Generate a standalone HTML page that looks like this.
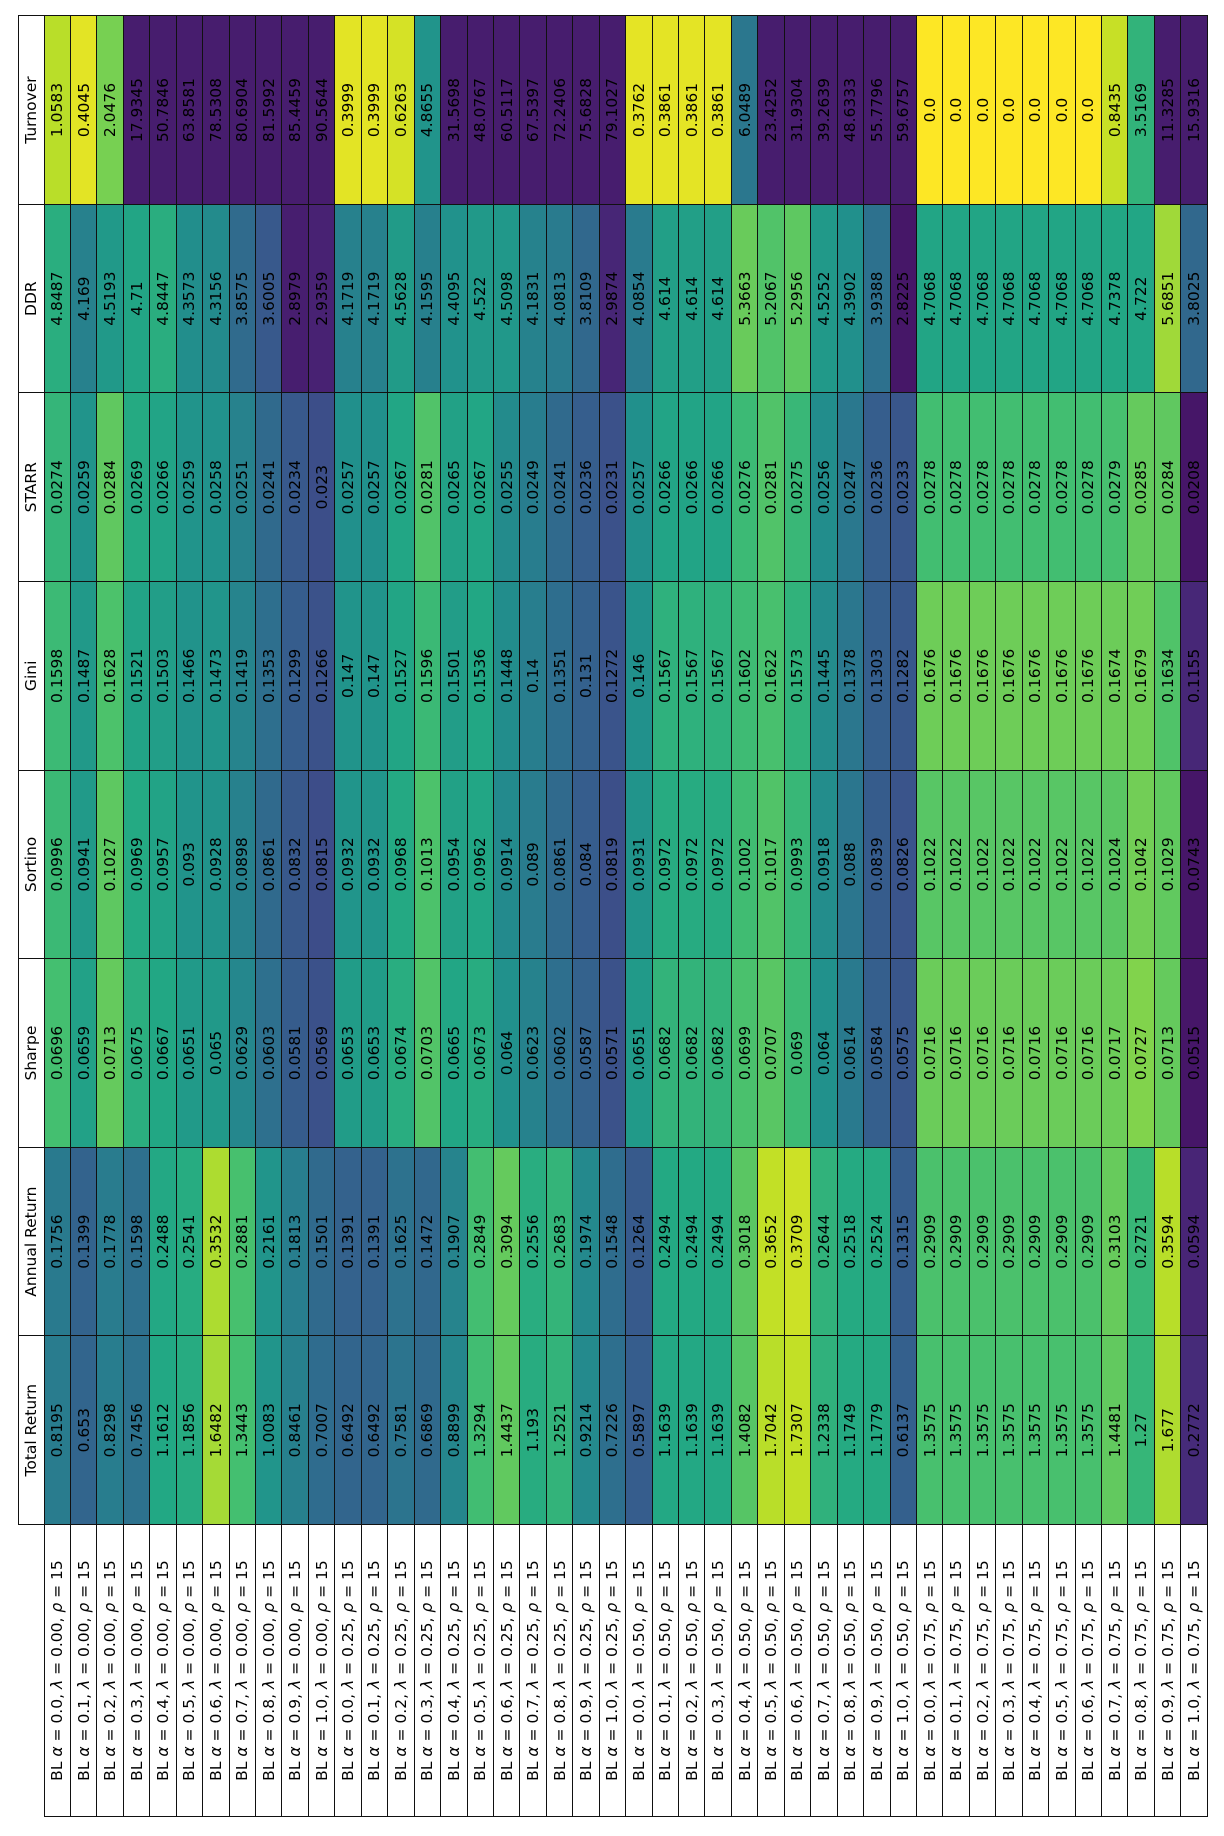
<!DOCTYPE html>
<html><head><meta charset="utf-8">
<style>
html,body{margin:0;padding:0;background:#fff;width:1224px;height:1836px;overflow:hidden;}
#wrap{position:absolute;left:17.5px;top:1817px;width:1801px;height:1190px;transform-origin:0 0;transform:rotate(-90deg);}
table{border-collapse:collapse;table-layout:fixed;width:1801px;height:1190px;font-family:"DejaVu Sans","Liberation Sans",sans-serif;font-size:15.5px;color:#000;}
td{border:1.3px solid #111;padding:0;text-align:center;white-space:nowrap;overflow:hidden;line-height:16px;}
tr.h{height:25.5px;}
tr.h td{background:#fff;}
td.c0{border:none;background:#fff;}
td.l{background:#fff;}
i{font-style:italic;}
</style></head><body>
<div id="wrap">
<table>
<colgroup><col style="width:292px"><col style="width:188.6px"><col style="width:188.6px"><col style="width:188.6px"><col style="width:188.6px"><col style="width:188.6px"><col style="width:188.6px"><col style="width:188.6px"><col style="width:188.6px"></colgroup>
<tr class="h"><td class="c0"></td><td>Total Return</td><td>Annual Return</td><td>Sharpe</td><td>Sortino</td><td>Gini</td><td>STARR</td><td>DDR</td><td>Turnover</td></tr>
<tr><td class="l">BL <i>α</i> = 0.0, <i>λ</i> = 0.00, <i>ρ</i> = 15</td><td>0.8195</td><td>0.1756</td><td>0.0696</td><td>0.0996</td><td>0.1598</td><td>0.0274</td><td>4.8487</td><td>1.0583</td></tr>
<tr><td class="l">BL <i>α</i> = 0.1, <i>λ</i> = 0.00, <i>ρ</i> = 15</td><td>0.653</td><td>0.1399</td><td>0.0659</td><td>0.0941</td><td>0.1487</td><td>0.0259</td><td>4.169</td><td>0.4045</td></tr>
<tr><td class="l">BL <i>α</i> = 0.2, <i>λ</i> = 0.00, <i>ρ</i> = 15</td><td>0.8298</td><td>0.1778</td><td>0.0713</td><td>0.1027</td><td>0.1628</td><td>0.0284</td><td>4.5193</td><td>2.0476</td></tr>
<tr><td class="l">BL <i>α</i> = 0.3, <i>λ</i> = 0.00, <i>ρ</i> = 15</td><td>0.7456</td><td>0.1598</td><td>0.0675</td><td>0.0969</td><td>0.1521</td><td>0.0269</td><td>4.71</td><td>17.9345</td></tr>
<tr><td class="l">BL <i>α</i> = 0.4, <i>λ</i> = 0.00, <i>ρ</i> = 15</td><td>1.1612</td><td>0.2488</td><td>0.0667</td><td>0.0957</td><td>0.1503</td><td>0.0266</td><td>4.8447</td><td>50.7846</td></tr>
<tr><td class="l">BL <i>α</i> = 0.5, <i>λ</i> = 0.00, <i>ρ</i> = 15</td><td>1.1856</td><td>0.2541</td><td>0.0651</td><td>0.093</td><td>0.1466</td><td>0.0259</td><td>4.3573</td><td>63.8581</td></tr>
<tr><td class="l">BL <i>α</i> = 0.6, <i>λ</i> = 0.00, <i>ρ</i> = 15</td><td>1.6482</td><td>0.3532</td><td>0.065</td><td>0.0928</td><td>0.1473</td><td>0.0258</td><td>4.3156</td><td>78.5308</td></tr>
<tr><td class="l">BL <i>α</i> = 0.7, <i>λ</i> = 0.00, <i>ρ</i> = 15</td><td>1.3443</td><td>0.2881</td><td>0.0629</td><td>0.0898</td><td>0.1419</td><td>0.0251</td><td>3.8575</td><td>80.6904</td></tr>
<tr><td class="l">BL <i>α</i> = 0.8, <i>λ</i> = 0.00, <i>ρ</i> = 15</td><td>1.0083</td><td>0.2161</td><td>0.0603</td><td>0.0861</td><td>0.1353</td><td>0.0241</td><td>3.6005</td><td>81.5992</td></tr>
<tr><td class="l">BL <i>α</i> = 0.9, <i>λ</i> = 0.00, <i>ρ</i> = 15</td><td>0.8461</td><td>0.1813</td><td>0.0581</td><td>0.0832</td><td>0.1299</td><td>0.0234</td><td>2.8979</td><td>85.4459</td></tr>
<tr><td class="l">BL <i>α</i> = 1.0, <i>λ</i> = 0.00, <i>ρ</i> = 15</td><td>0.7007</td><td>0.1501</td><td>0.0569</td><td>0.0815</td><td>0.1266</td><td>0.023</td><td>2.9359</td><td>90.5644</td></tr>
<tr><td class="l">BL <i>α</i> = 0.0, <i>λ</i> = 0.25, <i>ρ</i> = 15</td><td>0.6492</td><td>0.1391</td><td>0.0653</td><td>0.0932</td><td>0.147</td><td>0.0257</td><td>4.1719</td><td>0.3999</td></tr>
<tr><td class="l">BL <i>α</i> = 0.1, <i>λ</i> = 0.25, <i>ρ</i> = 15</td><td>0.6492</td><td>0.1391</td><td>0.0653</td><td>0.0932</td><td>0.147</td><td>0.0257</td><td>4.1719</td><td>0.3999</td></tr>
<tr><td class="l">BL <i>α</i> = 0.2, <i>λ</i> = 0.25, <i>ρ</i> = 15</td><td>0.7581</td><td>0.1625</td><td>0.0674</td><td>0.0968</td><td>0.1527</td><td>0.0267</td><td>4.5628</td><td>0.6263</td></tr>
<tr><td class="l">BL <i>α</i> = 0.3, <i>λ</i> = 0.25, <i>ρ</i> = 15</td><td>0.6869</td><td>0.1472</td><td>0.0703</td><td>0.1013</td><td>0.1596</td><td>0.0281</td><td>4.1595</td><td>4.8655</td></tr>
<tr><td class="l">BL <i>α</i> = 0.4, <i>λ</i> = 0.25, <i>ρ</i> = 15</td><td>0.8899</td><td>0.1907</td><td>0.0665</td><td>0.0954</td><td>0.1501</td><td>0.0265</td><td>4.4095</td><td>31.5698</td></tr>
<tr><td class="l">BL <i>α</i> = 0.5, <i>λ</i> = 0.25, <i>ρ</i> = 15</td><td>1.3294</td><td>0.2849</td><td>0.0673</td><td>0.0962</td><td>0.1536</td><td>0.0267</td><td>4.522</td><td>48.0767</td></tr>
<tr><td class="l">BL <i>α</i> = 0.6, <i>λ</i> = 0.25, <i>ρ</i> = 15</td><td>1.4437</td><td>0.3094</td><td>0.064</td><td>0.0914</td><td>0.1448</td><td>0.0255</td><td>4.5098</td><td>60.5117</td></tr>
<tr><td class="l">BL <i>α</i> = 0.7, <i>λ</i> = 0.25, <i>ρ</i> = 15</td><td>1.193</td><td>0.2556</td><td>0.0623</td><td>0.089</td><td>0.14</td><td>0.0249</td><td>4.1831</td><td>67.5397</td></tr>
<tr><td class="l">BL <i>α</i> = 0.8, <i>λ</i> = 0.25, <i>ρ</i> = 15</td><td>1.2521</td><td>0.2683</td><td>0.0602</td><td>0.0861</td><td>0.1351</td><td>0.0241</td><td>4.0813</td><td>72.2406</td></tr>
<tr><td class="l">BL <i>α</i> = 0.9, <i>λ</i> = 0.25, <i>ρ</i> = 15</td><td>0.9214</td><td>0.1974</td><td>0.0587</td><td>0.084</td><td>0.131</td><td>0.0236</td><td>3.8109</td><td>75.6828</td></tr>
<tr><td class="l">BL <i>α</i> = 1.0, <i>λ</i> = 0.25, <i>ρ</i> = 15</td><td>0.7226</td><td>0.1548</td><td>0.0571</td><td>0.0819</td><td>0.1272</td><td>0.0231</td><td>2.9874</td><td>79.1027</td></tr>
<tr><td class="l">BL <i>α</i> = 0.0, <i>λ</i> = 0.50, <i>ρ</i> = 15</td><td>0.5897</td><td>0.1264</td><td>0.0651</td><td>0.0931</td><td>0.146</td><td>0.0257</td><td>4.0854</td><td>0.3762</td></tr>
<tr><td class="l">BL <i>α</i> = 0.1, <i>λ</i> = 0.50, <i>ρ</i> = 15</td><td>1.1639</td><td>0.2494</td><td>0.0682</td><td>0.0972</td><td>0.1567</td><td>0.0266</td><td>4.614</td><td>0.3861</td></tr>
<tr><td class="l">BL <i>α</i> = 0.2, <i>λ</i> = 0.50, <i>ρ</i> = 15</td><td>1.1639</td><td>0.2494</td><td>0.0682</td><td>0.0972</td><td>0.1567</td><td>0.0266</td><td>4.614</td><td>0.3861</td></tr>
<tr><td class="l">BL <i>α</i> = 0.3, <i>λ</i> = 0.50, <i>ρ</i> = 15</td><td>1.1639</td><td>0.2494</td><td>0.0682</td><td>0.0972</td><td>0.1567</td><td>0.0266</td><td>4.614</td><td>0.3861</td></tr>
<tr><td class="l">BL <i>α</i> = 0.4, <i>λ</i> = 0.50, <i>ρ</i> = 15</td><td>1.4082</td><td>0.3018</td><td>0.0699</td><td>0.1002</td><td>0.1602</td><td>0.0276</td><td>5.3663</td><td>6.0489</td></tr>
<tr><td class="l">BL <i>α</i> = 0.5, <i>λ</i> = 0.50, <i>ρ</i> = 15</td><td>1.7042</td><td>0.3652</td><td>0.0707</td><td>0.1017</td><td>0.1622</td><td>0.0281</td><td>5.2067</td><td>23.4252</td></tr>
<tr><td class="l">BL <i>α</i> = 0.6, <i>λ</i> = 0.50, <i>ρ</i> = 15</td><td>1.7307</td><td>0.3709</td><td>0.069</td><td>0.0993</td><td>0.1573</td><td>0.0275</td><td>5.2956</td><td>31.9304</td></tr>
<tr><td class="l">BL <i>α</i> = 0.7, <i>λ</i> = 0.50, <i>ρ</i> = 15</td><td>1.2338</td><td>0.2644</td><td>0.064</td><td>0.0918</td><td>0.1445</td><td>0.0256</td><td>4.5252</td><td>39.2639</td></tr>
<tr><td class="l">BL <i>α</i> = 0.8, <i>λ</i> = 0.50, <i>ρ</i> = 15</td><td>1.1749</td><td>0.2518</td><td>0.0614</td><td>0.088</td><td>0.1378</td><td>0.0247</td><td>4.3902</td><td>48.6333</td></tr>
<tr><td class="l">BL <i>α</i> = 0.9, <i>λ</i> = 0.50, <i>ρ</i> = 15</td><td>1.1779</td><td>0.2524</td><td>0.0584</td><td>0.0839</td><td>0.1303</td><td>0.0236</td><td>3.9388</td><td>55.7796</td></tr>
<tr><td class="l">BL <i>α</i> = 1.0, <i>λ</i> = 0.50, <i>ρ</i> = 15</td><td>0.6137</td><td>0.1315</td><td>0.0575</td><td>0.0826</td><td>0.1282</td><td>0.0233</td><td>2.8225</td><td>59.6757</td></tr>
<tr><td class="l">BL <i>α</i> = 0.0, <i>λ</i> = 0.75, <i>ρ</i> = 15</td><td>1.3575</td><td>0.2909</td><td>0.0716</td><td>0.1022</td><td>0.1676</td><td>0.0278</td><td>4.7068</td><td>0.0</td></tr>
<tr><td class="l">BL <i>α</i> = 0.1, <i>λ</i> = 0.75, <i>ρ</i> = 15</td><td>1.3575</td><td>0.2909</td><td>0.0716</td><td>0.1022</td><td>0.1676</td><td>0.0278</td><td>4.7068</td><td>0.0</td></tr>
<tr><td class="l">BL <i>α</i> = 0.2, <i>λ</i> = 0.75, <i>ρ</i> = 15</td><td>1.3575</td><td>0.2909</td><td>0.0716</td><td>0.1022</td><td>0.1676</td><td>0.0278</td><td>4.7068</td><td>0.0</td></tr>
<tr><td class="l">BL <i>α</i> = 0.3, <i>λ</i> = 0.75, <i>ρ</i> = 15</td><td>1.3575</td><td>0.2909</td><td>0.0716</td><td>0.1022</td><td>0.1676</td><td>0.0278</td><td>4.7068</td><td>0.0</td></tr>
<tr><td class="l">BL <i>α</i> = 0.4, <i>λ</i> = 0.75, <i>ρ</i> = 15</td><td>1.3575</td><td>0.2909</td><td>0.0716</td><td>0.1022</td><td>0.1676</td><td>0.0278</td><td>4.7068</td><td>0.0</td></tr>
<tr><td class="l">BL <i>α</i> = 0.5, <i>λ</i> = 0.75, <i>ρ</i> = 15</td><td>1.3575</td><td>0.2909</td><td>0.0716</td><td>0.1022</td><td>0.1676</td><td>0.0278</td><td>4.7068</td><td>0.0</td></tr>
<tr><td class="l">BL <i>α</i> = 0.6, <i>λ</i> = 0.75, <i>ρ</i> = 15</td><td>1.3575</td><td>0.2909</td><td>0.0716</td><td>0.1022</td><td>0.1676</td><td>0.0278</td><td>4.7068</td><td>0.0</td></tr>
<tr><td class="l">BL <i>α</i> = 0.7, <i>λ</i> = 0.75, <i>ρ</i> = 15</td><td>1.4481</td><td>0.3103</td><td>0.0717</td><td>0.1024</td><td>0.1674</td><td>0.0279</td><td>4.7378</td><td>0.8435</td></tr>
<tr><td class="l">BL <i>α</i> = 0.8, <i>λ</i> = 0.75, <i>ρ</i> = 15</td><td>1.27</td><td>0.2721</td><td>0.0727</td><td>0.1042</td><td>0.1679</td><td>0.0285</td><td>4.722</td><td>3.5169</td></tr>
<tr><td class="l">BL <i>α</i> = 0.9, <i>λ</i> = 0.75, <i>ρ</i> = 15</td><td>1.677</td><td>0.3594</td><td>0.0713</td><td>0.1029</td><td>0.1634</td><td>0.0284</td><td>5.6851</td><td>11.3285</td></tr>
<tr><td class="l">BL <i>α</i> = 1.0, <i>λ</i> = 0.75, <i>ρ</i> = 15</td><td>0.2772</td><td>0.0594</td><td>0.0515</td><td>0.0743</td><td>0.1155</td><td>0.0208</td><td>3.8025</td><td>15.9316</td></tr>
</table>
</div>
<script>
(function(){
var V=[[68,1,84],[72,36,117],[65,68,135],[53,95,141],[42,120,142],[33,145,140],[34,168,132],[68,191,112],[122,209,81],[189,223,38],[253,231,37]];
function vir(t){t=Math.max(0.06,Math.min(1,t));var f=t*10,i=Math.min(9,Math.floor(f)),r=f-i,a=V[i],b=V[i+1];
return 'rgb('+Math.round(a[0]+(b[0]-a[0])*r)+','+Math.round(a[1]+(b[1]-a[1])*r)+','+Math.round(a[2]+(b[2]-a[2])*r)+')';}
var R=[[0.05,1.9],[0.02,0.40],[0.05,0.078],[0.072,0.113],[0.107,0.185],[0.0205,0.031],[2.6,6.2],[0,10]];
var rows=document.querySelectorAll('tr:not(.h)');
rows.forEach(function(tr){var tds=tr.querySelectorAll('td');
for(var j=1;j<tds.length;j++){var v=parseFloat(tds[j].textContent),r=R[j-1];
var t=(v-r[0])/(r[1]-r[0]); if(j==8)t=Math.max(0.08,1-t); tds[j].style.background=vir(t);}});
})();
</script>
</body></html>
